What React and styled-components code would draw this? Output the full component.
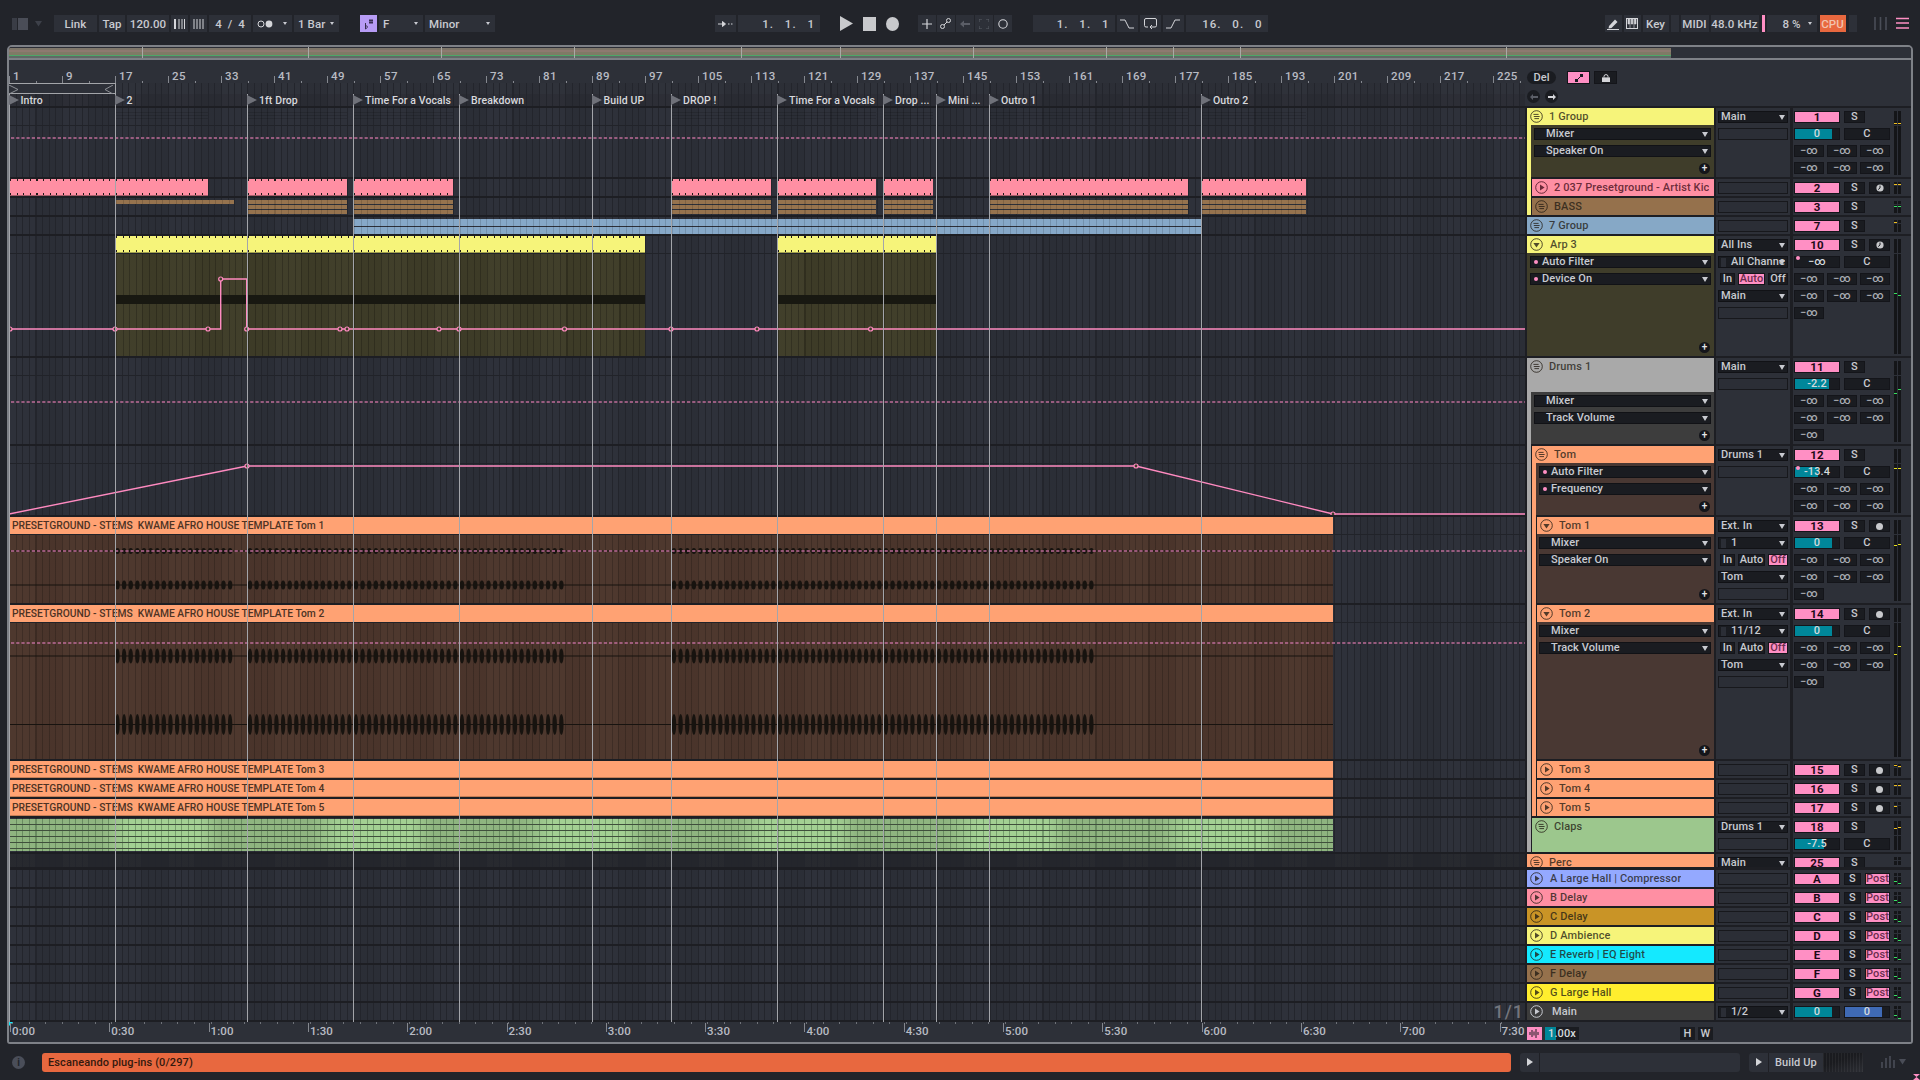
import React from "react";
import styled, { createGlobalStyle } from "styled-components";

const Y = "#f6f47a";
const PK = "#ff8fa3";
const BR = "#95714c";
const GY = "#a9a9a9";
const OR = "#ffa273";
const ACT = "#ff8fc4";
const BAR = 6.625;
const LANE_W = 1516;

const GlobalStyle = createGlobalStyle`
  html, body { margin: 0; padding: 0; background: #22242a; }
  body { font-family: Roboto, "Liberation Sans", sans-serif; font-size: 10.5px; font-weight: 500; letter-spacing: 0.1px; color: #c8cad0; }
  * { box-sizing: border-box; }
`;

const gridLines = (c = "#23252c") => `
  repeating-linear-gradient(90deg, ${c} 0 1px, transparent 1px ${BAR}px),
  repeating-linear-gradient(90deg, rgba(255,255,255,0.012) 0 26.5px, rgba(0,0,0,0.03) 26.5px 53px)
`;

const Page = styled.div`
  width: 1920px;
  height: 1080px;
  display: flex;
  flex-direction: column;
  overflow: hidden;
  background: #22242a;
`;

/* top bar */
const TopBar = styled.div`
  height: 45px;
  flex: none;
  display: flex;
  align-items: center;
  padding: 2px 0 0 12px;
`;
const Tool = styled.div`
  width: ${(p) => p.$w}px;
  height: 17px;
  margin-left: ${(p) => p.$ml ?? 2}px;
  flex: none;
  display: flex;
  align-items: center;
  justify-content: ${(p) => p.$align || "center"};
  padding: ${(p) => (p.$align ? "0 4px" : "0")};
  background: ${(p) => p.$bg || "#2d3038"};
  color: ${(p) => p.$color || "#c8cad0"};
  white-space: pre;
  position: relative;
  font-size: 11.5px;
`;
const Lcd = styled(Tool)`
  justify-content: flex-end;
  padding: 0 5px 0 0;
  word-spacing: 7px;
  letter-spacing: 1px;
`;
const Caret = styled.i`
  position: absolute;
  right: 5px;
  top: 7px;
  border-left: 2.5px solid transparent;
  border-right: 2.5px solid transparent;
  border-top: 3px solid #c8cad0;
`;
const Bare = styled.div`
  width: ${(p) => p.$w}px;
  margin-left: ${(p) => p.$ml ?? 0}px;
  flex: none;
  display: flex;
  align-items: center;
  justify-content: center;
`;

/* main panel */
const Panel = styled.div`
  position: relative;
  width: 1906px;
  height: 999px;
  margin-left: 7px;
  flex: none;
  display: flex;
  flex-direction: column;
  background: #1d1e23;
  border: 2px solid #7e8187;
  border-radius: 5px 5px 3px 3px;
  overflow: hidden;
`;
const Overview = styled.div`
  height: 13px;
  flex: none;
  position: relative;
  background: #2d3038;
  border-bottom: 2px solid #7e8187;
`;
const OverviewFill = styled.div`
  height: 100%;
  width: 1662px;
  background: linear-gradient(180deg, #2b2d35 0 1px, #7d7568 1px 3px, #8d7a70 3px 5px, #7f7a66 5px 7.5px, #4da768 7.5px 9px, #5f6a66 9px 11px);
`;
const OverviewMark = styled.i`
  position: absolute;
  top: 0;
  bottom: 0;
  width: 1px;
  background: #a9aaa6;
`;

const HeadRow = styled.div`
  height: 46px;
  flex: none;
  display: flex;
  background: #2d3038;
`;
const TimeHead = styled.div`
  width: ${LANE_W}px;
  display: flex;
  flex-direction: column;
`;
const Ruler = styled.div`
  position: relative;
  height: 23px;
  flex: none;
`;
const RulerMark = styled.span`
  position: absolute;
  top: 16px;
  height: 7px;
  border-left: 1px solid #85888f;
`;
const RulerNum = styled.span`
  position: absolute;
  left: 3px;
  top: -6px;
  line-height: 13px;
  font-size: 11.5px;
  letter-spacing: 0.4px;
  color: #b8bbc3;
`;
const RulerTick = styled.i`
  position: absolute;
  bottom: 0;
  width: 1px;
  height: 2px;
  background: #85888f;
`;
const LoopRow = styled.div`
  position: relative;
  height: 11px;
  flex: none;
  background: ${gridLines()};
`;
const LoopBrace = styled.div`
  position: absolute;
  left: 0;
  top: 0;
  width: 107px;
  height: 11px;
  background: #2d3038;
  border-top: 1px solid #a3a5a9;
  border-bottom: 1px solid #a3a5a9;
  border-right: 1px solid #a3a5a9;
`;
const LocatorRow = styled.div`
  flex: 1;
  background-color: #2a2c34;
  background-image: ${gridLines()};
`;
const ArrHead = styled.div`
  flex: 1;
  padding: 11px 0 0 2px;
  display: flex;
  flex-direction: column;
  gap: 6px;
`;
const HeadLine = styled.div`
  display: flex;
  align-items: center;
  gap: 4px;
`;
const DelPill = styled.div`
  width: 29px;
  height: 13px;
  margin-right: 7px;
  border-radius: 7px;
  background: #1a1c21;
  display: flex;
  align-items: center;
  justify-content: center;
  font-size: 11px;
`;
const HeadToggle = styled.div`
  width: 23px;
  height: 13px;
  background: ${(p) => (p.$on ? ACT : "#1a1c21")};
  border: 1px solid #14151a;
  display: flex;
  align-items: center;
  justify-content: center;
`;
const RoundNav = styled.div`
  width: 13px;
  height: 13px;
  margin-right: 1px;
  border-radius: 50%;
  background: #1a1c21;
  display: flex;
  align-items: center;
  justify-content: center;
`;

/* tracks */
const Stack = styled.div`
  margin-top: 2px;
  display: flex;
  flex-direction: column;
  gap: 2px;
`;
const Row = styled.div`
  height: ${(p) => p.$h}px;
  margin-bottom: ${(p) => p.$after || 0}px;
  flex: none;
  display: flex;
`;
const Lane = styled.div`
  position: relative;
  width: ${LANE_W}px;
  margin-right: 2px;
  flex: none;
  overflow: hidden;
  background-color: ${(p) => (p.$dark ? "#25272d" : "#2c2f38")};
  background-image: ${gridLines()};
  &::after {
    content: "";
    display: ${(p) => (p.$split ? "block" : "none")};
    position: absolute;
    left: 0;
    right: 0;
    top: ${(p) => p.$split}px;
    height: 1px;
    background: #212329;
  }
`;
const Clip = styled.div`
  position: absolute;
  top: ${(p) => p.$top || 0}px;
  height: ${(p) => p.$h}px;
  overflow: hidden;
  background: ${(p) => p.$color};
`;
const TickClip = styled(Clip)`
  background:
    repeating-linear-gradient(90deg, #1f1a18 0 1px, transparent 1px ${BAR}px) top left / 100% 2px no-repeat,
    repeating-linear-gradient(90deg, #1f1a18 0 1px, transparent 1px ${BAR}px) bottom 1px left / 100% 2px no-repeat,
    linear-gradient(180deg, ${(p) => p.$color} 0 16px, rgba(0, 0, 0, 0.35) 16px),
    ${(p) => p.$color};
`;
const BandClip = styled(Clip)`
  background:
    repeating-linear-gradient(90deg, rgba(0, 0, 0, 0.14) 0 1px, transparent 1px ${BAR}px),
    repeating-linear-gradient(180deg, ${(p) => p.$color} 0 ${(p) => p.$band}px, #2c2f38 ${(p) => p.$band}px ${(p) => p.$band + 1}px);
`;
const GroupHint = styled(Clip)`
  background: repeating-linear-gradient(180deg, rgba(0, 0, 0, 0.14) 0 1px, transparent 1px 3px);
`;
const MidiBody = styled.div`
  position: absolute;
  top: 17px;
  left: 0;
  right: 0;
  bottom: 0;
  background-color: #3f3d28;
  background-image: ${gridLines("rgba(0,0,0,0.22)")};
`;
const MidiGap = styled.div`
  position: absolute;
  top: 59px;
  left: 0;
  right: 0;
  height: 9px;
  background: #181811;
`;
const AudioClip = styled(Clip)`
  left: 0;
  width: 1324px;
  background: #4c362c;
`;
const ClipHead = styled.div`
  height: ${(p) => p.$h}px;
  padding: 0 3px;
  display: flex;
  align-items: center;
  background: ${OR};
  border-bottom: ${(p) => (p.$closed ? "1px solid #c67e56" : "0")};
  color: #4d3324;
  white-space: pre;
  font-size: 10.3px;
  letter-spacing: 0;
`;
const AudioBody = styled.div`
  position: absolute;
  top: 17px;
  left: 0;
  right: 0;
  bottom: 0;
  background-image: ${gridLines("rgba(0,0,0,0.2)")};
`;
const ClapClip = styled(Clip)`
  left: 0;
  width: 1324px;
  background:
    repeating-linear-gradient(180deg, transparent 0 5px, #3f4f3c 5px 6px),
    repeating-linear-gradient(90deg, rgba(50, 80, 50, 0.4) 0 1px, transparent 1px ${BAR}px),
    repeating-linear-gradient(90deg, rgba(60, 70, 50, 0.2) 0 90px, transparent 120px 190px, rgba(60, 70, 50, 0.2) 212px),
    #a3d093;
`;
const LaneDraw = styled.svg`
  position: absolute;
  left: 0;
  top: 0;
  z-index: 1;
`;
const ZoomNote = styled.div`
  position: absolute;
  right: 1px;
  bottom: 0;
  font-size: 18px;
  line-height: 17px;
  letter-spacing: 1px;
  color: #73757d;
`;

const TitleCell = styled.div`
  width: 187px;
  margin-right: 2px;
  flex: none;
  display: flex;
`;
const Stripe = styled.div`
  width: 4px;
  height: ${(p) => (p.$cont ? "calc(100% + 2px)" : "100%")};
  margin-right: ${(p) => (p.$flush ? 0 : 1)}px;
  flex: none;
  background: ${(p) => p.$color};
`;
const TitleBody = styled.div`
  flex: 1;
  min-width: 0;
  display: flex;
  flex-direction: column;
`;
const TitleBar = styled.div`
  height: ${(p) => p.$h}px;
  flex: none;
  display: flex;
  align-items: flex-start;
  background: ${(p) => p.$color};
  color: ${(p) => p.$ink || "rgba(35, 28, 20, 0.78)"};
`;
const TitleLine = styled.div`
  height: 17px;
  display: flex;
  align-items: center;
  gap: ${(p) => p.$gap || 6}px;
  padding-left: 3px;
  font-size: 11px;
  letter-spacing: 0.12px;
  white-space: pre;
  overflow: hidden;
`;
const ChainWrap = styled.div`
  flex: 1;
  display: flex;
  min-height: 0;
`;
const Chain = styled.div`
  position: relative;
  flex: 1;
  display: flex;
  flex-direction: column;
  gap: 5px;
  padding: 3px 3px 0 ${(p) => p.$pl ?? 3}px;
  background: ${(p) => p.$bg};
`;
const Chooser = styled.div`
  position: relative;
  height: 12px;
  flex: none;
  display: flex;
  align-items: center;
  gap: 3px;
  padding-left: ${(p) => p.$pl ?? 2}px;
  background: #1a1c21;
  border: 1px solid #111216;
  color: #c8cad0;
  white-space: pre;
  overflow: hidden;
  font-size: 11px;
  line-height: 10px;
`;
const Arrow = styled.i`
  position: absolute;
  right: 2px;
  top: 2.5px;
  border-left: 3.5px solid transparent;
  border-right: 3.5px solid transparent;
  border-top: 5px solid #c8cad0;
`;
const AutoDot = styled.i`
  width: 4px;
  height: 4px;
  flex: none;
  margin-right: 1px;
  border-radius: 50%;
  background: ${ACT};
`;
const PlusBtn = styled.div`
  position: absolute;
  right: 4px;
  bottom: 3px;
  width: 11px;
  height: 11px;
  border-radius: 50%;
  background: #14151a;
  color: #e4e5e8;
  font-size: 10px;
  line-height: 10px;
  text-align: center;
`;

const InputCell = styled.div`
  width: 74px;
  margin-right: 3px;
  flex: none;
  display: flex;
  flex-direction: column;
  gap: 5px;
  padding: 3px 2px 0;
  background: #2d3038;
  overflow: hidden;
`;
const EmptyField = styled.div`
  height: 12px;
  flex: none;
  background: #2b2e36;
  border: 1px solid #17181c;
`;
const ModeRow = styled.div`
  height: 12px;
  flex: none;
  display: flex;
  gap: 3px;
  padding-left: 2px;
`;
const ModeBtn = styled.div`
  width: ${(p) => p.$w}px;
  height: 12px;
  display: flex;
  align-items: center;
  justify-content: center;
  background: ${(p) => (p.$on ? ACT : "#1a1c21")};
  border: 1px solid #14151a;
  color: ${(p) => (p.$on ? "#6a2c4c" : "#c8cad0")};
  font-size: 11px;
  line-height: 10px;
`;
const TinyBars = styled.i`
  width: 5px;
  height: 9px;
  flex: none;
  margin-right: 2px;
  background: #2b2e36;
`;

const MixCell = styled.div`
  flex: 1;
  display: flex;
  padding: 3px 0 0 1px;
  background: #2d3038;
  overflow: hidden;
`;
const MixControls = styled.div`
  width: 96px;
  flex: none;
  margin-right: 4px;
  display: flex;
  flex-direction: column;
  gap: 5px;
`;
const MixLine = styled.div`
  height: 12px;
  flex: none;
  display: flex;
  gap: ${(p) => p.$gap ?? 4}px;
`;
const Cell = styled.div`
  position: relative;
  width: ${(p) => p.$w}px;
  height: 12px;
  flex: none;
  display: flex;
  align-items: center;
  justify-content: center;
  background: ${(p) => p.$bg || "#1a1c21"};
  border: 1px solid #14151a;
  color: ${(p) => p.$color || "#c8cad0"};
  font-size: 11px;
  line-height: 10px;
`;
const ActCell = styled(Cell)`
  color: #1d0a16;
  font-size: 11.5px;
  font-weight: 700;
`;
const SendCell = styled(Cell)`
  color: #a9acb4;
  font-size: 11px;
`;
const VolFill = styled.i`
  position: absolute;
  left: 0;
  top: 0;
  bottom: 0;
  background: #00879a;
`;
const VolText = styled.span`
  position: relative;
  color: #d5dadd;
`;
const CornerDot = styled.i`
  position: absolute;
  left: 1px;
  top: -1px;
  width: 4px;
  height: 4px;
  border-radius: 50%;
  background: ${ACT};
`;
const RecDot = styled.i`
  width: 7px;
  height: 7px;
  border-radius: 50%;
  background: #c8c9cc;
`;
const Meter = styled.div`
  position: relative;
  width: 7px;
  height: calc(100% - 2px);
  flex: none;
  display: flex;
  gap: 1px;
`;
const MeterBar = styled.i`
  flex: 1;
  background:
    linear-gradient(180deg, #141518 0 ${(p) => p.$split}px, #2d3038 ${(p) => p.$split}px ${(p) => p.$split + 1}px, #141518 ${(p) => p.$split + 1}px);
`;
const MeterTick = styled.i`
  position: absolute;
  width: 3px;
  height: 1px;
`;

/* bottom */
const BottomRow = styled.div`
  margin-top: 2px;
  height: 20px;
  flex: none;
  display: flex;
  background: #2d3038;
`;
const TimeRuler = styled.div`
  position: relative;
  width: ${LANE_W}px;
  margin-right: 2px;
  flex: none;
  background:
    repeating-linear-gradient(90deg, #6e7178 0 1px, transparent 1px 16.55px) 3px 0 / 100% 2px no-repeat;
`;
const TimeMark = styled.span`
  position: absolute;
  top: 1px;
  height: 9px;
  border-left: 1px solid #85888f;
`;
const TimeLabel = styled.span`
  position: absolute;
  left: 1px;
  top: 2px;
  line-height: 13px;
  font-size: 11.5px;
  color: #b8bbc3;
  white-space: nowrap;
`;
const PlayMark = styled.i`
  position: absolute;
  left: 0;
  top: 0;
  border-top: 4px solid #14e9ff;
  border-right: 4px solid transparent;
`;
const LaneControls = styled.div`
  flex: 1;
  display: flex;
  align-items: center;
  padding-top: 3px;
`;
const WaveBtn = styled.div`
  width: 15px;
  height: 13px;
  background: ${ACT};
  display: flex;
  align-items: center;
  justify-content: center;
`;
const SpeedBox = styled.div`
  position: relative;
  width: 34px;
  height: 13px;
  margin-left: 3px;
  background: #1a1c21;
  display: flex;
  align-items: center;
  justify-content: center;
  overflow: hidden;
  font-size: 11px;
`;
const SpeedFill = styled.i`
  position: absolute;
  left: 0;
  top: 0;
  bottom: 0;
  width: 11px;
  background: #00879a;
`;
const SmallKey = styled.div`
  width: 15px;
  height: 13px;
  margin-left: ${(p) => p.$ml}px;
  background: #1a1c21;
  display: flex;
  align-items: center;
  justify-content: center;
  font-size: 11px;
`;

/* locators sit over the lanes */
const LocatorLayer = styled.div`
  position: absolute;
  left: 0;
  top: 47px;
  width: ${LANE_W}px;
  height: 928px;
  overflow: hidden;
  pointer-events: none;
  z-index: 2;
`;
const Locator = styled.div`
  position: absolute;
  top: 0;
  bottom: 0;
  width: 1px;
  background: #a3a5aa;
`;
const Flag = styled.i`
  position: absolute;
  left: 0;
  top: 1px;
  border-left: 10px solid #6f7179;
  border-top: 5.5px solid transparent;
  border-bottom: 5.5px solid transparent;
`;
const FlagName = styled.span`
  position: absolute;
  left: 12px;
  top: 0;
  line-height: 13px;
  font-size: 10.5px;
  color: #d8d9dd;
  white-space: nowrap;
`;

/* status */
const StatusBar = styled.div`
  flex: 1;
  display: flex;
  align-items: center;
  padding: 0 0 0 12px;
  position: relative;
`;
const InfoDot = styled.div`
  width: 13px;
  height: 13px;
  border-radius: 50%;
  background: #4a4e59;
  color: #22242a;
  font-size: 10px;
  font-weight: 700;
  text-align: center;
  line-height: 13px;
`;
const Notice = styled.div`
  width: 1469px;
  height: 19px;
  margin-left: 17px;
  padding-left: 6px;
  display: flex;
  align-items: center;
  border-radius: 3px;
  background: #e8683f;
  color: #33190e;
  font-size: 11px;
`;
const StatusField = styled.div`
  height: 19px;
  width: ${(p) => p.$w}px;
  margin-left: ${(p) => p.$ml}px;
  display: flex;
  align-items: center;
  padding-left: ${(p) => p.$pl || 0}px;
  justify-content: ${(p) => (p.$center ? "center" : "flex-start")};
  background: #2d3038;
  border-left: ${(p) => (p.$line ? "1px solid #1f2025" : "0")};
  border-radius: ${(p) => p.$r || "0"};
  font-size: 11px;
`;
const Thumb = styled.div`
  width: 40px;
  height: 19px;
  background:
    repeating-linear-gradient(90deg, rgba(255, 255, 255, 0.05) 0 1px, transparent 1px 3px),
    linear-gradient(160deg, #1a1b1f 40%, #2b2d33 100%);
`;
const Hourglass = styled.svg`
  position: absolute;
  right: 0;
  bottom: 0;
`;

/* icons */
const Ico = ({ w = 14, h = 12, children }) => (
  <svg width={w} height={h} viewBox={`0 0 ${w} ${h}`}>{children}</svg>
);

const TrackIcon = ({ type, color }) => (
  <svg width="13" height="13" viewBox="0 0 13 13" style={{ flex: "none" }}>
    <circle cx="6.5" cy="6.5" r="5.8" fill="none" stroke={color} strokeWidth="1" />
    {type === "play" && <path d="M5 3.4 L9.6 6.5 L5 9.6 Z" fill={color} />}
    {type === "down" && <path d="M3.4 5 L9.6 5 L6.5 9.4 Z" fill={color} />}
    {type === "group" && <path d="M3.4 4.4 H8.6 M3.8 6.5 H9.6 M4.4 8.6 H9" stroke={color} strokeWidth="1" />}
  </svg>
);

const Dev = ({ name, auto, pad }) => (
  <Chooser $pl={auto ? 3 : pad}>
    {auto && <AutoDot />}
    {name}
    <Arrow />
  </Chooser>
);

const Input = ({ items }) => (
  <InputCell>
    {items.map((it, i) => {
      if (it === "") return <EmptyField key={i} />;
      if (it === "mode" || it === "modeOff" || it === "modeAuto")
        return (
          <ModeRow key={i}>
            <ModeBtn $w={15}>In</ModeBtn>
            <ModeBtn $w={27} $on={it === "modeAuto"}>Auto</ModeBtn>
            <ModeBtn $w={20} $on={it === "modeOff"}>Off</ModeBtn>
          </ModeRow>
        );
      if (it.bars)
        return (
          <Chooser key={i} $pl={2}>
            <TinyBars />
            {it.bars}
            <Arrow />
          </Chooser>
        );
      return (
        <Chooser key={i}>
          {it}
          <Arrow />
        </Chooser>
      );
    })}
  </InputCell>
);

const Sends = ({ n }) => {
  const lines = [];
  for (let i = 0; i < n; i += 3) {
    lines.push(
      <MixLine key={i} $gap={3}>
        {Array.from({ length: Math.min(3, n - i) }).map((_, k) => (
          <SendCell key={k} $w={30}>−∞</SendCell>
        ))}
      </MixLine>
    );
  }
  return lines;
};

const ClockDot = () => (
  <svg width="8" height="8" viewBox="0 0 8 8">
    <circle cx="4" cy="4" r="3.6" fill="#c8c9cc" />
    <path d="M4 1.6 V4 L2.2 5.6" stroke="#1a1c21" strokeWidth="1" fill="none" />
  </svg>
);

const Mixer = ({ t }) => (
  <MixCell>
    <MixControls>
      {t.main ? (
        <MixLine>
          <Cell $w={46}><VolFill style={{ width: "83%" }} /><VolText>0</VolText></Cell>
          <Cell $w={46}><VolFill style={{ width: "83%", background: "#3f6ab5" }} /><VolText>0</VolText></Cell>
        </MixLine>
      ) : (
        <MixLine>
          <ActCell $w={46} $bg={ACT}>{t.num}</ActCell>
          {t.ret ? (
            <>
              <Cell $w={17}>S</Cell>
              <Cell $w={25} $bg={ACT} $color="#6a2c4c">Post</Cell>
            </>
          ) : (
            <>
              <Cell $w={21}>S</Cell>
              {t.arm === "rec" && <Cell $w={21}><RecDot /></Cell>}
              {t.arm === "clock" && <Cell $w={21}><ClockDot /></Cell>}
            </>
          )}
        </MixLine>
      )}
      {t.vol && (
        <MixLine>
          <Cell $w={46}>
            <VolFill style={{ width: `${t.vol[1]}%` }} />
            {t.vol[2] && <CornerDot />}
            <VolText>{t.vol[0]}</VolText>
          </Cell>
          <Cell $w={46}>C</Cell>
        </MixLine>
      )}
      {t.sends && <Sends n={t.sends} />}
    </MixControls>
    <Meter>
      <MeterBar $split={t.h > 20 ? 14 : 3} />
      <MeterBar $split={t.h > 20 ? 14 : 3} />
      {(t.ticks || []).map(([y, c, side], i) => (
        <MeterTick key={i} style={{ top: y, left: side === 1 ? 4 : 0, background: c }} />
      ))}
    </Meter>
  </MixCell>
);

const Title = ({ t }) => {
  const ink = t.ink || "rgba(35, 28, 20, 0.78)";
  return (
    <TitleCell>
      {(t.stripes || []).map(([c, cont], i) => (
        <Stripe key={i} $color={c} $cont={cont} />
      ))}
      <TitleBody>
        <TitleBar $h={t.head || t.h} $color={t.color} $ink={ink}>
          <TitleLine $gap={t.gap}>
            <TrackIcon type={t.icon} color={ink} />
            {t.name}
          </TitleLine>
        </TitleBar>
        {t.chain && (
          <ChainWrap>
            {t.chain.stripe && <Stripe $color={t.chain.stripe} $flush $cont={t.chain.cont} />}
            <Chain $bg={t.chain.bg} $pl={t.chain.pl}>
              {t.chain.devices.map(([name, auto], i) => (
                <Dev key={i} name={name} auto={auto} pad={11} />
              ))}
              <PlusBtn>+</PlusBtn>
            </Chain>
          </ChainWrap>
        )}
      </TitleBody>
    </TitleCell>
  );
};

/* lane contents */
const pinkClips = [[10, 208], [248, 347], [354, 453], [672, 771], [778, 876], [884, 933], [990, 1095], [1095, 1188], [1202, 1306]];
const bassClips = [[248, 347], [354, 453], [672, 771], [778, 876], [884, 933], [990, 1188], [1202, 1306]];
const burstRanges = [[115.5, 232], [248, 563], [672, 1093]];

const spanStyle = (a, b) => ({ left: a - 9, width: b - a });

const Bursts = ({ y, amp }) => {
  const items = [];
  burstRanges.forEach(([a, b]) => {
    for (let x = a + 2; x < b; x += BAR) items.push(x - 9);
  });
  return (
    <g fill="#17130f">
      {items.map((x, i) => (
        <ellipse key={i} cx={x} cy={y} rx="2.2" ry={amp} />
      ))}
    </g>
  );
};

const AutoLine = ({ h, points, handles, y, dashed }) => (
  <LaneDraw width={LANE_W} height={h}>
    {dashed ? (
      <line x1="2" x2={LANE_W} y1={y} y2={y} stroke="#bd6c98" strokeWidth="1.6" strokeDasharray="3.2 2" />
    ) : (
      <polyline points={points} fill="none" stroke="#ff8ac0" strokeWidth="1.4" />
    )}
    {(handles || []).map(([x, yy], i) => (
      <circle key={i} cx={x} cy={yy} r="2" fill="#3f3d28" stroke="#ff8ac0" strokeWidth="1.2" />
    ))}
  </LaneDraw>
);

const AudioTrack = ({ h, label, dash, waves }) => (
  <>
    <AudioClip $h={h}>
      <ClipHead $h={17}>{label}</ClipHead>
      <AudioBody />
      <LaneDraw width={1324} height={h}>
        {waves.map(([y, amp], i) => (
          <g key={i}>
            <line x1="0" x2="1324" y1={y} y2={y} stroke="#17130f" strokeWidth="1" />
            <Bursts y={y} amp={amp} />
          </g>
        ))}
      </LaneDraw>
    </AudioClip>
    <AutoLine h={h} y={dash} dashed />
  </>
);

const stem = (n) => `PRESETGROUND - STEMS  KWAME AFRO HOUSE TEMPLATE Tom ${n}`;

const arpY = 93;
const arpHandles = [[1, arpY], [106, arpY], [199, arpY], [211.7, 43], [237.7, arpY], [331, arpY], [338, arpY], [430, arpY], [450, arpY], [555.5, arpY], [662, arpY], [748, arpY], [861.6, arpY]];
const arpPoints = `0,${arpY} 211.7,${arpY} 211.7,43 237.7,43 237.7,${arpY} ${LANE_W},${arpY}`;

const laneOf = {
  g1: (
    <>
      {pinkClips.map(([a, b], i) => (
        <GroupHint key={i} $top={4} $h={9} style={spanStyle(Math.max(a, 116), b)} />
      ))}
      <AutoLine h={69} y={30} dashed />
    </>
  ),
  kick: pinkClips.map(([a, b], i) => <TickClip key={i} $color={PK} $h={17} style={spanStyle(a, b)} />),
  bass: (
    <>
      <BandClip $color="#96734e" $band={4} $top={2} $h={4} style={spanStyle(116, 234)} />
      {bassClips.map(([a, b], i) => (
        <BandClip key={i} $color="#96734e" $band={4} $top={2} $h={14} style={spanStyle(a, b)} />
      ))}
    </>
  ),
  g7: <BandClip $color="#86a8c8" $band={7} $top={2} $h={15} style={spanStyle(354, 1201)} />,
  arp: (
    <>
      {[[116, 645], [778, 937]].map(([a, b], i) => (
        <Clip key={i} $color="transparent" $h={120} style={spanStyle(a, b)}>
          <TickClip $color={Y} $h={17} style={{ left: 0, right: 0 }} />
          <MidiBody />
          <MidiGap />
        </Clip>
      ))}
      <AutoLine h={120} points={arpPoints} handles={arpHandles} />
    </>
  ),
  drums: <AutoLine h={86} y={44} dashed />,
  tom: (
    <AutoLine
      h={69}
      points={`0,68 238,20 1127,20 1324,68 ${LANE_W},68`}
      handles={[[238, 20], [1127, 20], [1324, 68]]}
    />
  ),
  tom1: <AudioTrack h={86} label={stem(1)} dash={34} waves={[[34, 3], [68, 4.5]]} />,
  tom2: <AudioTrack h={154} label={stem(2)} dash={38} waves={[[51, 7.5], [119.5, 10.5]]} />,
  tom3: <AudioClip $h={17}><ClipHead $h={17} $closed>{stem(3)}</ClipHead></AudioClip>,
  tom4: <AudioClip $h={17}><ClipHead $h={17} $closed>{stem(4)}</ClipHead></AudioClip>,
  tom5: <AudioClip $h={17}><ClipHead $h={17} $closed>{stem(5)}</ClipHead></AudioClip>,
  claps: <ClapClip $color="#9fcc90" $top={1} $h={32} />,
  main: <ZoomNote>1/1</ZoomNote>,
};

const darkG = { bg: "#3d3d3d", stripe: GY, devices: [["Mixer"], ["Track Volume"]], cont: true };

const tracks = [
  { id: "g1", h: 69, head: 17, split: 17, color: Y, icon: "group", name: "1 Group", chain: { bg: "#3f3d2a", stripe: Y, cont: true, devices: [["Mixer"], ["Speaker On"]] }, io: ["Main", ""], num: 1, vol: ["0", 83], sends: 6, ticks: [[12, "#f0c020"], [12, "#f0c020", 1]] },
  { id: "kick", h: 17, color: PK, icon: "play", name: "2 037 Presetground - Artist Kic", stripes: [[Y, true]], io: [""], num: 2, arm: "clock", ink: "rgba(90, 30, 45, 0.9)", ticks: [[2, "#f0c020"], [2, "#f0c020", 1]] },
  { id: "bass", h: 17, color: BR, icon: "group", name: "BASS", stripes: [[Y, false]], io: [""], num: 3, ticks: [[5, "#36e060"], [5, "#36e060", 1]] },
  { id: "g7", h: 17, color: "#86a8c6", icon: "group", name: "7 Group", io: [""], num: 7, ticks: [[2, "#f0c020"]] },
  { id: "arp", h: 120, head: 17, split: 17, color: Y, icon: "down", name: "Arp 3", gap: 7, chain: { bg: "#3f3d2a", devices: [["Auto Filter", true], ["Device On", true]] }, io: ["All Ins", { bars: "All Channe" }, "modeAuto", "Main", ""], num: 10, arm: "clock", vol: ["−∞", 0, true], sends: 7, ticks: [[54, "#36e060"], [56, "#36e060", 1]] },
  { id: "drums", h: 86, head: 34, split: 17, color: GY, icon: "group", name: "Drums 1", chain: darkG, io: ["Main", ""], num: 11, vol: ["-2.2", 78], sends: 7, ticks: [[32, "#36e060"], [28, "#36e060", 1]] },
  { id: "tom", h: 69, head: 17, split: 17, color: OR, icon: "group", name: "Tom", stripes: [[GY, true]], chain: { bg: "#493833", stripe: OR, cont: true, devices: [["Auto Filter", true], ["Frequency", true]] }, io: ["Drums 1", ""], num: 12, vol: ["-13.4", 53, true], sends: 6, ticks: [[19, "#e6e020"], [19, "#e6e020", 1]] },
  { id: "tom1", h: 86, head: 17, split: 17, color: OR, icon: "down", name: "Tom 1", stripes: [[GY, true], [OR, true]], chain: { bg: "#493833", pl: 2, devices: [["Mixer"], ["Speaker On"]] }, io: ["Ext. In", { bars: "1" }, "modeOff", "Tom", ""], num: 13, arm: "rec", vol: ["0", 83], sends: 7, ticks: [[25, "#e6e020"], [24, "#e6e020", 1]] },
  { id: "tom2", h: 154, head: 17, split: 17, color: OR, icon: "down", name: "Tom 2", stripes: [[GY, true], [OR, true]], chain: { bg: "#493833", pl: 2, devices: [["Mixer"], ["Track Volume"]] }, io: ["Ext. In", { bars: "11/12" }, "modeOff", "Tom", ""], num: 14, arm: "rec", vol: ["0", 83], sends: 7, ticks: [[46, "#e6e020"], [38, "#e6e020", 1]] },
  { id: "tom3", h: 17, color: OR, icon: "play", name: "Tom 3", stripes: [[GY, true], [OR, true]], io: [""], num: 15, arm: "rec", ticks: [[1, "#f0c020"], [2, "#f0c020", 1]] },
  { id: "tom4", h: 17, color: OR, icon: "play", name: "Tom 4", stripes: [[GY, true], [OR, true]], io: [""], num: 16, arm: "rec", ticks: [[2, "#f0c020"], [2, "#f0c020", 1]] },
  { id: "tom5", h: 17, color: OR, icon: "play", name: "Tom 5", stripes: [[GY, true], [OR, false]], io: [""], num: 17, arm: "rec", ticks: [[4, "#f0c020"]] },
  { id: "claps", h: 34, color: "#9cc78d", icon: "group", name: "Claps", stripes: [[GY, false]], io: ["Drums 1", ""], num: 18, vol: ["-7.5", 65], ticks: [[7, "#f0c020"], [6, "#f0c020", 1]] },
  { id: "perc", h: 13, dark: true, color: OR, icon: "group", name: "Perc", io: ["Main"], num: 25, after: 1 },
  ...[
    ["A", "A Large Hall | Compressor", "#94a9ff"],
    ["B", "B Delay", PK],
    ["C", "C Delay", "#c99426"],
    ["D", "D Ambience", Y],
    ["E", "E Reverb | EQ Eight", "#14e9ff"],
    ["F", "F Delay", BR],
    ["G", "G Large Hall", "#ffee2e"],
  ].map(([num, name, color]) => ({ id: `ret${num}`, h: 17, color, icon: "play", name, io: [""], num, ret: true, gap: 7, ticks: [[8, "#36e060"], [10, "#36e060", 1]] })),
  { id: "main", h: 17, color: "#3c3c3c", icon: "play", name: "Main", ink: "#c8cad0", gap: 9, io: [{ bars: "1/2" }], main: true, ticks: [[9, "#36e060"], [12, "#36e060", 1]] },
];

const locators = [
  [1, "Intro"], [17, "2"], [37, "1ft Drop"], [53, "Time For a Vocals"], [69, "Breakdown"], [89, "Build UP"],
  [101, "DROP !"], [117, "Time For a Vocals"], [133, "Drop ..."], [141, "Mini ..."], [149, "Outro 1"], [181, "Outro 2"],
];
const barX = (b) => (b - 1) * BAR;
const rulerBars = Array.from({ length: 29 }, (_, i) => 1 + i * 8);
const times = Array.from({ length: 16 }, (_, i) => `${Math.floor(i / 2)}:${i % 2 ? "30" : "00"}`);
const white = "#d4d5d9";

const App = () => (
  <>
    <GlobalStyle />
    <Page>
      <TopBar>
        <Bare $w={18}>
          <Ico w={18} h={14}>
            <rect x="0" y="1" width="5" height="12" fill="#3a3d46" />
            <rect x="6" y="1" width="10" height="12" fill="#4a4d57" />
          </Ico>
        </Bare>
        <Bare $w={10} $ml={4}>
          <Ico w={8} h={6}><path d="M0 0 H7 L3.5 5.5 Z" fill="#3d4049" /></Ico>
        </Bare>
        <Tool $w={43} $ml={10}>Link</Tool>
        <Tool $w={26}>Tap</Tool>
        <Tool $w={42}>120.00</Tool>
        <Tool $w={17}>
          <Ico w={11} h={10}><path d="M1 0 V10 M5 0 V10 M8 0 V10 M10.5 0 V10" stroke={white} strokeWidth="1" /><rect x="0" width="2" height="10" fill={white} /></Ico>
        </Tool>
        <Tool $w={17}>
          <Ico w={11} h={10}><path d="M1 0 V10 M4 0 V10 M7 0 V10 M10 0 V10" stroke={white} strokeWidth="1" /></Ico>
        </Tool>
        <Tool $w={42}>{"4  /  4"}</Tool>
        <Tool $w={39} $align="flex-start">
          <Ico w={16} h={8}><circle cx="4" cy="4" r="3" fill="none" stroke={white} /><circle cx="12" cy="4" r="3.4" fill={white} /></Ico>
          <Caret />
        </Tool>
        <Tool $w={45} $align="flex-start">1 Bar<Caret /></Tool>
        <Tool $w={17} $ml={21} $bg="#b79cf5" $color="#2a2340">
          <Ico w={10} h={12}><path d="M1.5 5 V11 M1.5 8.2 C4 7 4 10 1.5 11 M6 1 V6 M8 1 V6 M5 2.6 H9 M5 4.4 H9" stroke="#2a2340" strokeWidth="0.9" fill="none" /></Ico>
        </Tool>
        <Tool $w={44} $align="flex-start">F<Caret /></Tool>
        <Tool $w={70} $align="flex-start">Minor<Caret /></Tool>

        <Tool $w={21} $ml={220}>
          <Ico w={15} h={8}><path d="M0 4 H7 M4.5 1.5 L7.5 4 L4.5 6.5 Z M10 4 H11.5 M13 4 H14.5" stroke={white} fill={white} strokeWidth="1" /></Ico>
        </Tool>
        <Lcd $w={82}>1. 1. 1</Lcd>
        <Bare $w={13} $ml={20}><Ico w={13} h={15}><path d="M0 0 L13 7.5 L0 15 Z" fill="#c8c9cc" /></Ico></Bare>
        <Bare $w={13} $ml={10}><Ico w={13} h={14}><rect width="13" height="14" fill="#c8c9cc" /></Ico></Bare>
        <Bare $w={13} $ml={10}><Ico w={13} h={14}><ellipse cx="6.5" cy="7" rx="6.5" ry="7" fill="#c8c9cc" /></Ico></Bare>
        <Tool $w={17.5} $ml={19}>
          <Ico w={10} h={10}><path d="M5 0 V10 M0 5 H10" stroke={white} strokeWidth="1.2" /></Ico>
        </Tool>
        <Tool $w={17.5} $ml={1.5}>
          <Ico w={11} h={11}><circle cx="2.5" cy="8.5" r="2" fill="none" stroke={white} /><circle cx="8.5" cy="2.5" r="2" fill="none" stroke={white} /><path d="M4 7 L7 4" stroke={white} /></Ico>
        </Tool>
        <Tool $w={17.5} $ml={1.5}>
          <Ico w={10} h={8}><path d="M0 4 L4 0.5 V3 H10 V5 H4 V7.5 Z" fill="#5b5e67" /></Ico>
        </Tool>
        <Tool $w={17.5} $ml={1.5}>
          <Ico w={10} h={10}><path d="M0 3 V0 H3 M7 0 H10 V3 M10 7 V10 H7 M3 10 H0 V7" stroke="#5b5e67" fill="none" /></Ico>
        </Tool>
        <Tool $w={17.5} $ml={1.5}>
          <Ico w={10} h={10}><circle cx="5" cy="5" r="4.2" fill="none" stroke={white} strokeWidth="1.1" /></Ico>
        </Tool>
        <Lcd $w={82} $ml={21}>1. 1. 1</Lcd>
        <Tool $w={21}>
          <Ico w={14} h={10}><path d="M0 1 H5 L9 9 H14" stroke={white} fill="none" /></Ico>
        </Tool>
        <Tool $w={21}>
          <Ico w={13} h={12}><path d="M4 9 H2 Q0.5 9 0.5 7.5 V2 Q0.5 0.5 2 0.5 H11 Q12.5 0.5 12.5 2 V7.5 Q12.5 9 11 9 H6 M8 7 L6 9 L8 11" stroke={white} fill="none" /></Ico>
        </Tool>
        <Tool $w={21}>
          <Ico w={14} h={10}><path d="M0 9 H5 L9 1 H14" stroke={white} fill="none" /></Ico>
        </Tool>
        <Lcd $w={82}>16. 0. 0</Lcd>

        <Tool $w={17} $ml={337}>
          <Ico w={12} h={12}><path d="M2 8 L8 1.5 L10.5 4 L4.5 10 L1.5 10.5 Z" fill={white} /><path d="M0 11.5 H12" stroke={white} /></Ico>
        </Tool>
        <Tool $w={17}>
          <Ico w={12} h={11}><rect x="0.5" y="0.5" width="11" height="10" fill="none" stroke={white} /><path d="M2 1 H3.5 V6 H2 Z M5.2 1 H6.8 V6 H5.2 Z M8.5 1 H10 V6 H8.5 Z M4 1 V10 M8 1 V10" fill={white} stroke={white} strokeWidth="0.6" /></Ico>
        </Tool>
        <Tool $w={26}>Key</Tool>
        <Tool $w={8} />
        <Tool $w={28}>MIDI</Tool>
        <Tool $w={48}>48.0 kHz</Tool>
        <Tool $w={3} $ml={3} $bg={ACT} />
        <Tool $w={50} $align="center">8 %<Caret /></Tool>
        <Tool $w={26} $ml={3} $bg="#e8683f" $color="#f2c4b0">CPU</Tool>
        <Tool $w={8} $ml={3} />
        <Bare $w={13} $ml={17}>
          <Ico w={13} h={13}><path d="M1 0 V13 M6.5 0 V13 M12 0 V13" stroke="#4a4d57" strokeWidth="1.6" /></Ico>
        </Bare>
        <Bare $w={13} $ml={9}>
          <Ico w={13} h={13}><path d="M0 1.5 H13 M0 6 H13 M0 11 H13" stroke={ACT} strokeWidth="1.6" /></Ico>
        </Bare>
      </TopBar>

      <Panel>
        <Overview>
          <OverviewFill />
          {locators.slice(1).map(([b]) => (
            <OverviewMark key={b} style={{ left: barX(b) * 1.255 }} />
          ))}
        </Overview>

        <HeadRow>
          <TimeHead>
            <Ruler>
              {rulerBars.map((b) => (
                <RulerMark key={b} style={{ left: barX(b) }}>
                  <RulerNum>{b}</RulerNum>
                </RulerMark>
              ))}
              {rulerBars.map((b) => (
                <RulerTick key={b} style={{ left: barX(b + 4) }} />
              ))}
            </Ruler>
            <LoopRow>
              <LoopBrace>
                <Ico w={107} h={9}>
                  <path d="M0 0 L9 4.5 L0 9 M104 0 L96 4.5 L104 9" stroke="#8e9096" fill="none" />
                </Ico>
              </LoopBrace>
            </LoopRow>
            <LocatorRow />
          </TimeHead>
          <ArrHead>
            <HeadLine>
              <DelPill>Del</DelPill>
              <HeadToggle $on>
                <Ico w={8} h={8}><path d="M1.5 6.5 L6.5 1.5" stroke="#1a1c21" strokeWidth="1" /><rect y="5" width="3" height="3" fill="#1a1c21" /><rect x="5" width="3" height="3" fill="#1a1c21" /></Ico>
              </HeadToggle>
              <HeadToggle>
                <Ico w={8} h={8}><rect y="3.4" width="8" height="4.6" fill={white} /><path d="M2 3.6 V2.4 Q2 0.6 4 0.6 Q6 0.6 6 2.4 V3.6" stroke={white} fill="none" /></Ico>
              </HeadToggle>
            </HeadLine>
            <HeadLine>
              <RoundNav>
                <Ico w={8} h={6}><path d="M0 3 L3 0 V2 H8 V4 H3 V6 Z" fill="#5b5e67" /></Ico>
              </RoundNav>
              <RoundNav>
                <Ico w={8} h={6}><path d="M8 3 L5 0 V2 H0 V4 H5 V6 Z" fill={white} /></Ico>
              </RoundNav>
            </HeadLine>
          </ArrHead>
        </HeadRow>

        <Stack>
          {tracks.map((t) => (
            <Row key={t.id} $h={t.h} $after={t.after}>
              <Lane $split={t.split} $dark={t.dark}>{laneOf[t.id]}</Lane>
              <Title t={t} />
              <Input items={t.io} />
              <Mixer t={t} />
            </Row>
          ))}
        </Stack>

        <BottomRow>
          <TimeRuler>
            <PlayMark />
            {times.map((s, i) => (
              <TimeMark key={s} style={{ left: 1 + i * 99.3 }}><TimeLabel>{s}</TimeLabel></TimeMark>
            ))}
          </TimeRuler>
          <LaneControls>
            <WaveBtn>
              <Ico w={11} h={9}><path d="M1 3 V6 M3 1 V8 M5 2.5 V6.5 M7 0 V9 M9 3 V6" stroke="#1a1c21" strokeWidth="1" /></Ico>
            </WaveBtn>
            <SpeedBox>
              <SpeedFill />
              <VolText>1.00x</VolText>
            </SpeedBox>
            <SmallKey $ml={101}>H</SmallKey>
            <SmallKey $ml={3}>W</SmallKey>
          </LaneControls>
        </BottomRow>

        <LocatorLayer>
          {locators.map(([b, name]) => (
            <Locator key={b} style={{ left: barX(b) - 0.5 }}>
              <Flag />
              <FlagName>{name}</FlagName>
            </Locator>
          ))}
        </LocatorLayer>
      </Panel>

      <StatusBar>
        <InfoDot>i</InfoDot>
        <Notice>Escaneando plug-ins (0/297)</Notice>
        <StatusField $w={19} $ml={9} $center $r="3px 0 0 3px">
          <Ico w={6} h={8}><path d="M0 0 L6 4 L0 8 Z" fill={white} /></Ico>
        </StatusField>
        <StatusField $w={201} $ml={0} $line $r="0 3px 3px 0" />
        <StatusField $w={19} $ml={9} $center $r="3px 0 0 3px">
          <Ico w={6} h={8}><path d="M0 0 L6 4 L0 8 Z" fill={white} /></Ico>
        </StatusField>
        <StatusField $w={55} $ml={0} $line $pl={6}>Build Up</StatusField>
        <Thumb />
        <Bare $w={14} $ml={18}>
          <Ico w={14} h={12}><path d="M1 6 V12 M5 2 V12 M9 0 V12 M13 4 V12" stroke="#4a4d57" strokeWidth="1.6" /></Ico>
        </Bare>
        <Bare $w={8} $ml={4}>
          <Ico w={8} h={6}><path d="M0 0 H7 L3.5 5.5 Z" fill="#4a4d57" /></Ico>
        </Bare>
        <Hourglass width="7" height="6" viewBox="0 0 7 6">
          <path d="M0 0 H7 L3.5 3 L7 6 H0 L3.5 3 Z" fill={ACT} />
        </Hourglass>
      </StatusBar>
    </Page>
  </>
);

export default App;
